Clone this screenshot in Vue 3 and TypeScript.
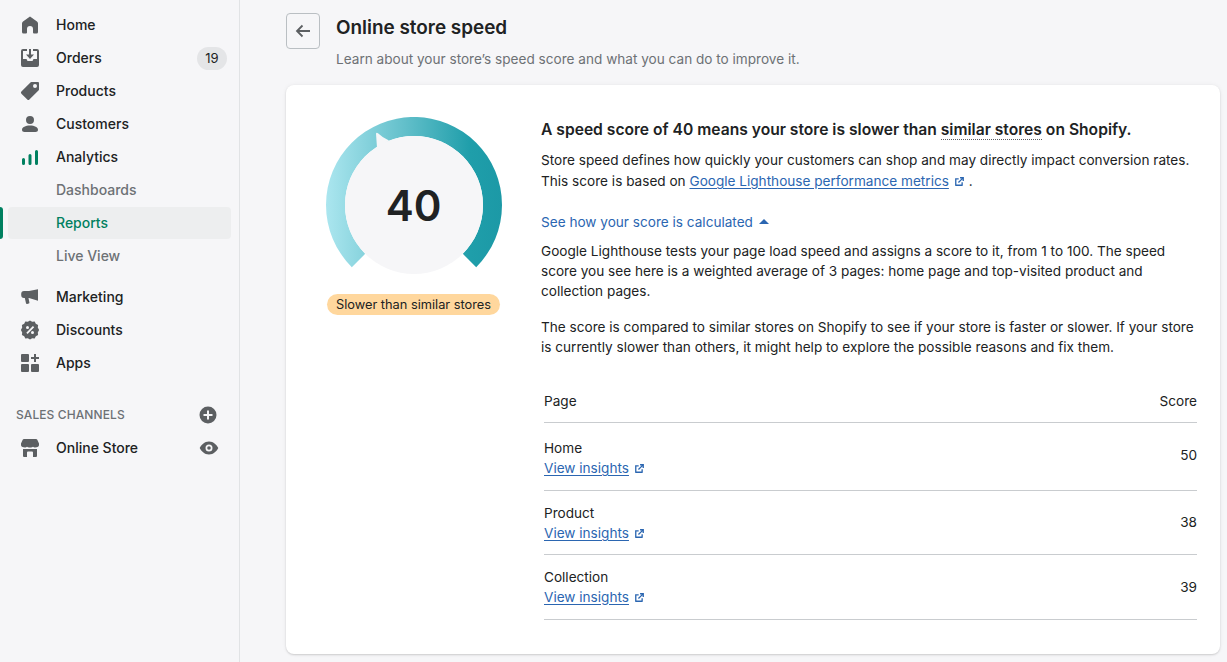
<script setup lang="ts">
interface NavItem { label: string; icon?: string; green?: boolean; badge?: string }
const mainItems: NavItem[] = [
  { label: 'Home', icon: 'M10 1.500 3 6.500A2.500 2.500 0 0 0 2 8.600V17a1.500 1.500 0 0 0 1.500 1.500H6a1 1 0 0 0 1-1V14a3 3 0 0 1 6 0v3.500a1 1 0 0 0 1 1h2.500A1.500 1.500 0 0 0 18 17V8.600a2.500 2.500 0 0 0-1-2.100L10 1.500z' },
  { label: 'Orders', badge: '19', icon: 'M3 1h4v2H3v8h3.500l1 2h5l1-2H17V3h-4V1h4a2 2 0 0 1 2 2v14a2 2 0 0 1-2 2H3a2 2 0 0 1-2-2V3a2 2 0 0 1 2-2zM9 1h2v5.500h3L10 11 6 6.500h3V1z' },
  { label: 'Products', icon: 'M18 1h-6.600a1 1 0 0 0-.7.300L1.400 10.600a1.500 1.500 0 0 0 0 2.100l5.900 5.900a1.500 1.500 0 0 0 2.100 0l9.300-9.300a1 1 0 0 0 .3-.7V2a1 1 0 0 0-1-1zm-3 6a2 2 0 1 1 0-4 2 2 0 0 1 0 4z' },
  { label: 'Customers', icon: 'M10 10a4 4 0 1 0 0-8 4 4 0 0 0 0 8zM10 11.500c-4.500 0-8 1.700-8 4.300C2 17.300 3 18 4.500 18h11c1.500 0 2.500-.7 2.500-2.200 0-2.600-3.500-4.300-8-4.300z' },
  { label: 'Analytics', green: true, icon: 'M2 12.500a1.500 1.500 0 0 1 3 0v4a1.500 1.500 0 0 1-3 0zM8.500 8.500a1.500 1.500 0 0 1 3 0v8a1.500 1.500 0 0 1-3 0zM15 4.500a1.500 1.500 0 0 1 3 0v12a1.500 1.500 0 0 1-3 0z' },
]
const lowerItems: NavItem[] = [
  { label: 'Marketing', icon: 'M18 2.200v11.600L9 11H8.500l.9 4.400a1 1 0 0 1-.7 1.200l-1.500.4a1 1 0 0 1-1.200-.7L4.800 11H4a3 3 0 0 1-2.800-3V7A3 3 0 0 1 4 4h5z' },
  { label: 'Discounts', icon: 'M10 .5l2.200 1.300 2.500-.3 1.100 2.300 2.300 1.100-.3 2.500L19.100 10l-1.300 2.600.3 2.500-2.300 1.100-1.100 2.300-2.500-.3L10 19.500l-2.200-1.300-2.500.3-1.100-2.300-2.300-1.100.3-2.500L.9 10l1.300-2.600-.3-2.500 2.300-1.100 1.100-2.300 2.500.3zM7.500 6a1.500 1.500 0 1 0 0 3 1.500 1.500 0 0 0 0-3zm5 5a1.500 1.500 0 1 0 0 3 1.500 1.500 0 0 0 0-3zm.4-5.100-6.600 6.800 1.300 1.300 6.600-6.800z' },
  { label: 'Apps', icon: 'M1 2a1 1 0 0 1 1-1h6a1 1 0 0 1 1 1v6a1 1 0 0 1-1 1H2a1 1 0 0 1-1-1zM1 12a1 1 0 0 1 1-1h6a1 1 0 0 1 1 1v6a1 1 0 0 1-1 1H2a1 1 0 0 1-1-1zM11 12a1 1 0 0 1 1-1h6a1 1 0 0 1 1 1v6a1 1 0 0 1-1 1h-6a1 1 0 0 1-1-1zM14 1h2v3h3v2h-3v3h-2V6h-3V4h3z' },
]
const subItems = ['Dashboards', 'Reports', 'Live View']
const pages = [
  { name: 'Home', score: 50 },
  { name: 'Product', score: 38 },
  { name: 'Collection', score: 39 },
]
const externalPath = 'M11 2h7v7h-2.400V6.100l-6.700 6.700-1.700-1.700L13.900 4.400H11zM2 4h6.500v2.400H4.400v9.200h9.200v-4.100H16V17a1 1 0 0 1-1 1H3a1 1 0 0 1-1-1V4z'
</script>

<template>
  <div class="app">
    <aside class="side">
      <a v-for="item in mainItems" :key="item.label" class="nav">
        <svg class="ico" :class="{ green: item.green }" viewBox="0 0 20 20"><path :d="item.icon" fill-rule="evenodd" /></svg>
        <span>{{ item.label }}</span>
        <b v-if="item.badge" class="count">{{ item.badge }}</b>
      </a>
      <a v-for="s in subItems" :key="s" class="sub" :class="{ on: s === 'Reports' }"><span>{{ s }}</span></a>
      <div class="lower">
        <a v-for="item in lowerItems" :key="item.label" class="nav">
          <svg class="ico" viewBox="0 0 20 20"><path :d="item.icon" fill-rule="evenodd" /></svg>
          <span>{{ item.label }}</span>
        </a>
      </div>
      <div class="channels">
        <span>SALES CHANNELS</span>
        <svg class="mini" viewBox="0 0 20 20"><path fill-rule="evenodd" d="M10 1.500a8.500 8.500 0 1 0 0 17 8.500 8.500 0 0 0 0-17zM9 5.500h2V9h3.500v2H11v3.500H9V11H5.500V9H9z" /></svg>
      </div>
      <a class="nav">
        <svg class="ico" viewBox="0 0 20 20"><path fill-rule="evenodd" d="M4 1h12a1.500 1.500 0 0 1 1.300.8L19 5.500V7a2.300 2.300 0 0 1-3 2.200 3 3 0 0 1-3-.4 3.300 3.300 0 0 1-3 .7 3.300 3.300 0 0 1-3-.7 3 3 0 0 1-3 .4A2.300 2.300 0 0 1 1 7V5.500l1.700-3.700A1.500 1.500 0 0 1 4 1zM3 11h14v7a1 1 0 0 1-1 1h-3v-4.500a1 1 0 0 0-1-1H8a1 1 0 0 0-1 1V19H4a1 1 0 0 1-1-1z" /></svg>
        <span>Online Store</span>
        <svg class="mini eye" viewBox="0 0 20 20"><path fill-rule="evenodd" d="M10 3.500c4.500 0 8 3.600 9.300 6.500-1.300 2.900-4.800 6.500-9.300 6.500S2 12.900.7 10C2 7.100 5.500 3.500 10 3.500zm0 3a3.500 3.500 0 1 0 0 7 3.500 3.500 0 0 0 0-7zm0 1.700a1.800 1.800 0 1 1 0 3.600 1.800 1.800 0 0 1 0-3.600z" /></svg>
      </a>
    </aside>

    <main class="main">
      <header class="head">
        <button class="back" aria-label="Back">
          <svg viewBox="0 0 20 20" width="20" height="20"><path d="M17 10H4M9.500 4.500 4 10l5.500 5.500" fill="none" stroke="#5c5f62" stroke-width="1.800" /></svg>
        </button>
        <div>
          <h1>Online store speed</h1>
          <p>Learn about your store’s speed score and what you can do to improve it.</p>
        </div>
      </header>

      <section class="card">
        <div class="left">
          <div class="gauge">
            <svg viewBox="0 0 176 160" width="176" height="160">
              <defs>
                <linearGradient id="ring" x1="0" y1="0" x2="1" y2="0">
                  <stop offset="0" stop-color="#abe6ef" />
                  <stop offset="0.45" stop-color="#62bfca" />
                  <stop offset="0.82" stop-color="#1f9eaa" />
                  <stop offset="1" stop-color="#1c99a6" />
                </linearGradient>
              </defs>
              <path d="M25.800 150.200A88 88 0 1 1 150.200 150.200L136.800 136.800A69 69 0 1 0 39.200 136.800Z" fill="url(#ring)" />
              <circle cx="88" cy="88" r="69" fill="#f6f6f8" />
              <path d="M50 16.500Q50.500 15 52 16.200Q57 21 63 23.500L51 31Z" fill="#f6f6f8" />
            </svg>
            <span class="num">40</span>
          </div>
          <span class="pill">Slower than similar stores</span>
        </div>

        <div class="right">
          <h2>A speed score of 40 means your store is slower than <span class="dotted">similar stores</span> on Shopify.</h2>
          <p class="intro">Store speed defines how quickly your customers can shop and may directly impact conversion rates. This score is based on <a class="link">Google Lighthouse performance metrics</a><svg class="ext" viewBox="0 0 20 20"><path :d="externalPath" fill-rule="evenodd" /></svg> .</p>
          <div class="toggle">See how your score is calculated <i class="caret"></i></div>
          <p class="para">Google Lighthouse tests your page load speed and assigns a score to it, from 1 to 100. The speed score you see here is a weighted average of 3 pages: home page and top-visited product and collection pages.</p>
          <p class="para two">The score is compared to similar stores on Shopify to see if your store is faster or slower. If your store is currently slower than others, it might help to explore the possible reasons and fix them.</p>

          <div class="table">
            <div class="thead"><span>Page</span><span>Score</span></div>
            <div v-for="p in pages" :key="p.name" class="row">
              <div class="cell">
                <span>{{ p.name }}</span>
                <span><a class="link">View insights</a><svg class="ext" viewBox="0 0 20 20"><path :d="externalPath" fill-rule="evenodd" /></svg></span>
              </div>
              <span class="score">{{ p.score }}</span>
            </div>
          </div>
        </div>
      </section>
    </main>
  </div>
</template>

<style scoped>
.app {
  display: flex;
  height: 662px;
  overflow: hidden;
  background: #f6f6f8;
  color: #202223;
  font-family: Inter, "Liberation Sans", sans-serif;
  font-size: 14px;
  line-height: 20px;
}
.side {
  flex: 0 0 240px;
  box-sizing: border-box;
  padding-top: 8.500px;
  border-right: 1px solid #e1e3e5;
}
.nav {
  display: flex;
  align-items: center;
  height: 33px;
  padding-left: 20px;
  font-weight: 500;
  position: relative;
}
.ico { width: 20px; height: 20px; margin-right: 16px; fill: #5c5f62; flex: none; }
.ico.green { fill: #008060; }
.count {
  position: absolute;
  left: 197px;
  top: 5px;
  width: 30px;
  height: 23px;
  border-radius: 12px;
  background: #e4e5e7;
  text-align: center;
  font-size: 13px;
  font-weight: 400;
  line-height: 23px;
}
.sub {
  display: block;
  height: 33px;
  padding-left: 56px;
  line-height: 32px;
  color: #6d7175;
  font-weight: 500;
  position: relative;
}
.sub span { position: relative; }
.sub.on { color: #008060; }
.sub.on::before {
  content: "";
  position: absolute;
  left: 8px;
  right: 8px;
  top: 0;
  height: 32px;
  border-radius: 4px;
  background: #edeeef;
}
.sub.on::after {
  content: "";
  position: absolute;
  left: 0;
  top: 0;
  width: 3px;
  height: 32px;
  border-radius: 0 3px 3px 0;
  background: #008060;
}
.lower { margin-top: 8px; }
.channels {
  display: flex;
  align-items: center;
  justify-content: space-between;
  height: 20px;
  margin-top: 25px;
  padding: 0 21px 0 16px;
  font-size: 12px;
  font-weight: 500;
  letter-spacing: .1px;
  color: #6d7175;
  margin-bottom: 7px;
}
.mini { width: 20px; height: 20px; fill: #5c5f62; }
.eye { position: absolute; left: 199px; top: 6px; }
.main {
  flex: 1;
  min-width: 0;
  padding: 13px 7px 0 46px;
}
.head { display: flex; gap: 16px; height: 72px; }
.back {
  box-sizing: border-box;
  width: 34px;
  height: 36px;
  padding: 0;
  border: 1px solid #babfc3;
  border-radius: 4px;
  background: transparent;
  display: flex;
  align-items: center;
  justify-content: center;
}
h1 {
  margin: 3px 0 0;
  font-size: 18.900px;
  line-height: 24px;
  font-weight: 600;
}
.head p { margin: 9px 0 0; color: #6d7175; font-size: 13.600px; }
.card {
  display: flex;
  height: 569px;
  box-sizing: border-box;
  background: #fff;
  border-radius: 8px;
  box-shadow: 0 0 5px rgba(23, 24, 24, .05), 0 1px 2px rgba(0, 0, 0, .15);
}
.left {
  flex: 0 0 255px;
  display: flex;
  flex-direction: column;
  align-items: center;
  padding-top: 32px;
}
.gauge { position: relative; width: 176px; height: 160px; }
.gauge svg { display: block; }
.num {
  position: absolute;
  left: 0;
  right: 0;
  top: 63px;
  text-align: center;
  font-size: 42px;
  line-height: 52px;
  font-weight: 600;
}
.pill {
  margin-top: 17px;
  padding: 0 8.500px;
  height: 21px;
  border-radius: 11px;
  background: #ffd79d;
  font-size: 12.800px;
  line-height: 21px;
}
.right { flex: 1; min-width: 0; padding: 35px 23px 0 0; }
h2 { margin: 0; font-size: 15.630px; line-height: 20px; font-weight: 600; }
.dotted { border-bottom: 1px dotted #5c5f62; }
.intro { margin: 10px 0 0; font-size: 13.600px; line-height: 21px; }
.link { color: #2b66b1; text-decoration: underline; text-underline-offset: 2px; }
.ext { width: 11px; height: 11px; margin-left: 5px; fill: #2b66b1; vertical-align: -1px; }
.toggle { margin-top: 20px; color: #2b66b1; font-size: 13.600px; }
.caret {
  display: inline-block;
  border: 5px solid transparent;
  border-top: 0;
  border-bottom-color: #2b66b1;
  vertical-align: 3px;
  margin-left: 2px;
}
.para { margin: 9px 0 0; font-size: 13.600px; line-height: 20px; }
.para.two { margin-top: 16px; }
.table { margin: 22.500px 0 0 3px; font-size: 13.600px; }
.thead {
  display: flex;
  justify-content: space-between;
  height: 42.500px;
  align-items: center;
  border-bottom: 1px solid #c9cccf;
}
.row {
  display: flex;
  justify-content: space-between;
  align-items: center;
  height: 63.500px;
  border-bottom: 1px solid #c9cccf;
}
.thead + .row { height: 66.500px; }
.thead + .row .cell { padding-top: 3.500px; }
.thead + .row .score { padding-bottom: 2px; }
.thead + .row + .row .cell { padding-top: 2px; }
.cell { display: flex; flex-direction: column; }
</style>

<style>
body { margin: 0; }
</style>
